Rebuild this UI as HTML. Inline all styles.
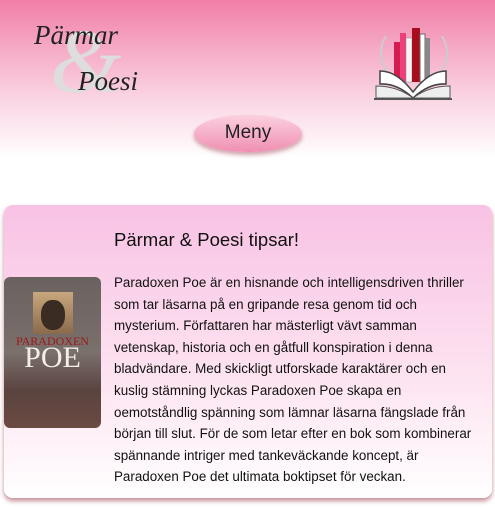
<!DOCTYPE html>
<html><head><meta charset="utf-8"><style>
*{margin:0;padding:0;box-sizing:border-box}
body{width:495px;height:507px;overflow:hidden;font-family:"Liberation Sans","DejaVu Sans",sans-serif;color:#1a1a1a;background:#fff;position:relative}
.hdr{position:absolute;left:0;top:0;width:495px;height:160px;background:linear-gradient(#f17ea6 0px,#f5a7c4 45px,#fad6e4 100px,#fff 158px)}
.logo{position:absolute;font-family:"Liberation Serif",serif;font-style:italic;color:#222}
.amp{position:absolute;left:50px;top:8px;font-size:92px;color:#ddd;font-family:"Liberation Serif",serif;font-style:italic}
.menu{position:absolute;left:194px;top:115px;width:108px;height:37px;border-radius:50%;background:linear-gradient(#fbd0df,#f08fb3);box-shadow:0 3px 4px rgba(150,60,70,.45);text-align:center;line-height:36px;font-size:19px;color:#222}
.card{position:absolute;left:4px;top:205px;width:488px;height:293px;border-radius:9px;background:linear-gradient(#f8c2e4,#fde4f1 60%,#fff);box-shadow:0 3px 5px rgba(150,50,60,.55)}
h1{position:absolute;left:114px;top:229px;font-size:18.5px;font-weight:normal;color:#111}
.txt{position:absolute;left:114px;top:272px;font-size:13.4px;line-height:21.6px;white-space:nowrap;color:#111}
.book{position:absolute;left:4px;top:277px;width:97px;height:151px;border-radius:6px;background:linear-gradient(#6a6260,#7a706c 50%,#5a4440 75%,#6b4a42);overflow:hidden}
</style></head><body>
<div class="hdr"></div>
<div class="amp">&amp;</div>
<div class="logo" style="left:34px;top:20px;font-size:27px">Pärmar</div>
<div class="logo" style="left:78px;top:66px;font-size:27px">Poesi</div>
<svg style="position:absolute;left:372px;top:26px" width="82" height="76" viewBox="0 0 82 76">
<path d="M14 10 Q2 30 18 50 M70 10 Q82 30 66 50" stroke="#ccc" stroke-width="2" fill="none"/>
<rect x="22" y="16" width="6" height="40" fill="#d41a4e"/>
<rect x="28" y="7" width="6" height="49" fill="#ee3f78"/>
<rect x="34" y="12" width="6" height="44" fill="#f4f4f4" stroke="#888" stroke-width=".5"/>
<rect x="40" y="2" width="8" height="54" fill="#a80d1e"/>
<rect x="48" y="8" width="5" height="48" fill="#fff" stroke="#666"/>
<rect x="53" y="12" width="5" height="44" fill="#888"/>
<path d="M8 45 Q25 45 41 66 Q57 45 74 45 L74 58 Q57 57 41 72 Q25 57 8 58Z" fill="#fff" stroke="#444" stroke-width="1.5"/>
<path d="M2 72 L80 72 L80 74 L2 74Z" fill="#555"/>
<path d="M4 60 Q25 60 41 72 Q57 60 78 60 L78 72 L4 72Z" fill="#eee" stroke="#555"/>
</svg>
<div class="menu">Meny</div>
<div class="card"></div>
<h1>Pärmar &amp; Poesi tipsar!</h1>
<div class="book">
<div style="position:absolute;left:29px;top:15px;width:40px;height:42px;background:linear-gradient(#c9a77e,#8a6a4a);"><div style="margin:8px auto 0;width:24px;height:30px;border-radius:45%;background:#3a2c22"></div></div>
<div style="position:absolute;left:0;width:97px;top:57px;text-align:center;font-family:'Liberation Serif',serif;color:#a01818;font-size:12px">PARADOXEN</div>
<div style="position:absolute;left:0;width:97px;top:64px;text-align:center;font-family:'Liberation Serif',serif;color:#f3eee8;font-size:30px">POE</div>
</div>
<div class="txt">Paradoxen Poe är en hisnande och intelligensdriven thriller<br>som tar läsarna på en gripande resa genom tid och<br>mysterium. Författaren har mästerligt vävt samman<br>vetenskap, historia och en gåtfull konspiration i denna<br>bladvändare. Med skickligt utforskade karaktärer och en<br>kuslig stämning lyckas Paradoxen Poe skapa en<br>oemotståndlig spänning som lämnar läsarna fängslade från<br>början till slut. För de som letar efter en bok som kombinerar<br>spännande intriger med tankeväckande koncept, är<br>Paradoxen Poe det ultimata boktipset för veckan.</div>
</body></html>
